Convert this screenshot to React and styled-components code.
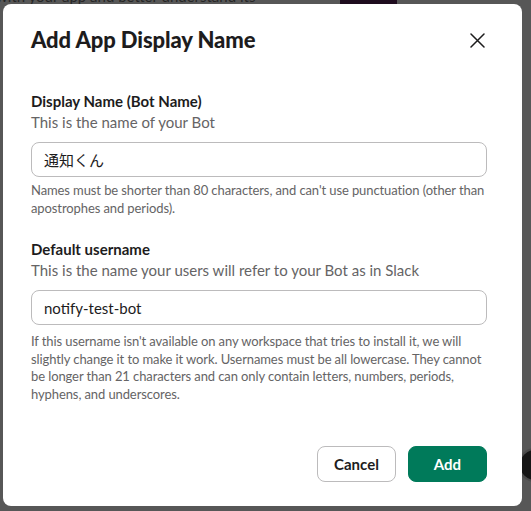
import styled, { createGlobalStyle } from "styled-components"

const GlobalStyle = createGlobalStyle`
    html, body {
        margin: 0;
        padding: 0;
        height: 100%;
        background: #565656;
        font-family: Lato, "Noto Sans CJK JP", "Liberation Sans", sans-serif;
        -webkit-font-smoothing: antialiased;
    }
    #root {
        height: 100%;
    }
`

// the dimmed slack page behind the dialog
const Backdrop = styled.div`
    position: relative;
    width: 531px;
    height: 511px;
    overflow: hidden;
    background: #575757;
`

const BackText = styled.div`
    position: absolute;
    top: -13px;
    left: -4px;
    font-size: 15px;
    line-height: 18px;
    color: #262626;
    white-space: nowrap;
`

const BackBlock = styled.div`
    position: absolute;
    top: 0;
    left: 340px;
    width: 57px;
    height: 4px;
    background: #1e0c1e;
`

const BackDot = styled.div`
    position: absolute;
    top: 450px;
    left: 520px;
    width: 30px;
    height: 30px;
    border-radius: 50%;
    background: #161616;
    box-shadow: 0 0 0 2px #4b4b4b;
`

const Modal = styled.div`
    position: absolute;
    top: 4px;
    left: 3px;
    width: 519px;
    height: 502px;
    box-sizing: border-box;
    background: #fff;
    border-radius: 8px;
    display: flex;
    flex-direction: column;
    padding: 0 35px 24px 28px;
    color: #1d1c1d;
`

const Header = styled.div`
    display: flex;
    align-items: center;
    justify-content: space-between;
    padding-top: 22px;
    height: 28px;
`

const Title = styled.h1`
    margin: 0;
    font-size: 22px;
    line-height: 28px;
    font-weight: 900;
    letter-spacing: -0.1px;
`

const CloseButton = styled.button`
    border: none;
    background: none;
    padding: 0;
    width: 20px;
    height: 20px;
    display: flex;
    align-items: center;
    justify-content: center;
    color: #1d1c1d;
`

const Body = styled.div`
    flex: 1;
    padding-top: 36px;
`

const Field = styled.div`
    display: flex;
    flex-direction: column;
    & + & {
        margin-top: 21px;
    }
`

const Label = styled.label`
    font-size: 15px;
    line-height: 22px;
    font-weight: 700;
`

const Description = styled.div`
    font-size: 15px;
    line-height: 21px;
    color: #656465;
`

const Input = styled.input`
    margin-top: 9px;
    height: 35px;
    box-sizing: border-box;
    border: 1px solid #bcbbbc;
    border-radius: 8px;
    padding: 0 12px;
    font: inherit;
    font-size: 15px;
    color: #1d1c1d;
    outline: none;
`

const Help = styled.div`
    margin-top: ${props => props.gap}px;
    font-size: 13px;
    line-height: 17.6px;
    letter-spacing: -0.1px;
    color: #656465;
`

const Footer = styled.div`
    display: flex;
    justify-content: flex-end;
    gap: 12px;
`

const Button = styled.button`
    height: 36px;
    min-width: 79px;
    box-sizing: border-box;
    border-radius: 8px;
    font: inherit;
    font-size: 15px;
    font-weight: 700;
    padding: 0 16px;
    border: 1px solid ${props => props.primary ? "#007a5a" : "#bcbbbc"};
    background: ${props => props.primary ? "#007a5a" : "#fff"};
    color: ${props => props.primary ? "#fff" : "#1d1c1d"};
`

export default () => {
    return (
        <>
            <GlobalStyle />
            <Backdrop>
                <BackText>with your app and better understand its</BackText>
                <BackBlock />
                <BackDot />
                <Modal>
                    <Header>
                        <Title>Add App Display Name</Title>
                        <CloseButton aria-label="Close">
                            <svg width="15" height="15" viewBox="0 0 15 15">
                                <path d="M1 1 L14 14 M14 1 L1 14" stroke="currentColor" strokeWidth="1.5" strokeLinecap="round" />
                            </svg>
                        </CloseButton>
                    </Header>
                    <Body>
                        <Field>
                            <Label>Display Name (Bot Name)</Label>
                            <Description>This is the name of your Bot</Description>
                            <Input defaultValue="通知くん" />
                            <Help gap={5}>Names must be shorter than 80 characters, and can't use punctuation (other than apostrophes and periods).</Help>
                        </Field>
                        <Field>
                            <Label>Default username</Label>
                            <Description>This is the name your users will refer to your Bot as in Slack</Description>
                            <Input defaultValue="notify-test-bot" />
                            <Help gap={8}>If this username isn't available on any workspace that tries to install it, we will slightly change it to make it work. Usernames must be all lowercase. They cannot be longer than 21 characters and can only contain letters, numbers, periods, hyphens, and underscores.</Help>
                        </Field>
                    </Body>
                    <Footer>
                        <Button>Cancel</Button>
                        <Button primary>Add</Button>
                    </Footer>
                </Modal>
            </Backdrop>
        </>
    )
}
